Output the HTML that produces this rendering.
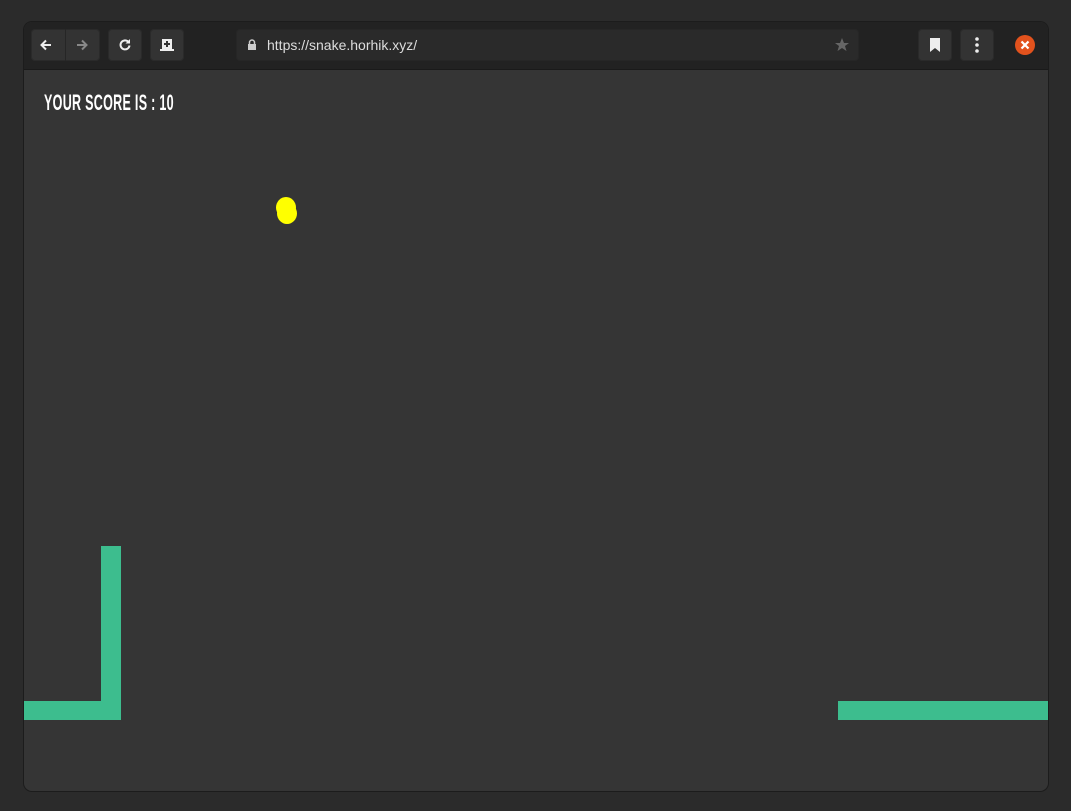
<!DOCTYPE html>
<html><head><style>
html,body{margin:0;padding:0;width:1071px;height:811px;background:#2b2b2b;overflow:hidden;font-family:"Liberation Sans",sans-serif}
.win{position:absolute;left:24px;top:22px;width:1024px;height:769px;border-radius:8px;background:#353535;overflow:hidden;box-shadow:0 0 0 1px #1c1c1c}
.bar{position:absolute;left:0;top:0;width:1024px;height:47px;background:#222;border-bottom:1px solid #1a1a1a}
.btn{position:absolute;top:7px;height:32px;background:#333;border-radius:4px;box-shadow:inset 0 0 0 1px #2a2a2a}
.url{position:absolute;left:212px;top:7px;width:623px;height:32px;background:#2a2a2a;border-radius:4px;box-shadow:inset 0 0 0 1px #262626}
.url span{position:absolute;left:31px;top:8px;color:#ddd;font-size:14px}
.g{position:absolute;background:#3dbd8e}
.score{position:absolute;left:20px;top:68px;color:#fff;font-weight:bold;font-size:22px;transform:scaleX(0.57);transform-origin:left top;white-space:nowrap;letter-spacing:0.5px}
.food{position:absolute;width:20px;height:21px;border-radius:50%;background:#ffff00}
</style></head><body>
<div class="win">
 <div class="bar">
  <div class="btn" style="left:7px;width:69px"></div>
  <div style="position:absolute;left:41px;top:7px;width:1px;height:32px;background:#262626"></div>
  <svg style="position:absolute;left:15px;top:16px" width="14" height="14" viewBox="0 0 14 14"><path d="M12 7H3M7 2.5L2.5 7 7 11.5" stroke="#eee" stroke-width="2" fill="none"/></svg>
  <svg style="position:absolute;left:51px;top:16px" width="14" height="14" viewBox="0 0 14 14"><path d="M2 7h9M7 2.5L11.5 7 7 11.5" stroke="#888" stroke-width="2" fill="none"/></svg>
  <div class="btn" style="left:84px;width:34px"></div>
  <svg style="position:absolute;left:93px;top:15px" width="16" height="16" viewBox="0 0 16 16"><path d="M12.5 8.5A4.5 4.5 0 1 1 11 4.5" stroke="#eee" stroke-width="2" fill="none"/><path d="M13 2v4.5H8.5z" fill="#eee"/></svg>
  <div class="btn" style="left:126px;width:34px"></div>
  <svg style="position:absolute;left:135px;top:16px" width="16" height="14" viewBox="0 0 16 14"><path d="M3 1h10v10h2v2H1v-2h2z" fill="#eee"/><path d="M8 3v6M5 6h6" stroke="#333" stroke-width="2"/></svg>
  <div class="url"><svg style="position:absolute;left:11px;top:10px" width="10" height="12" viewBox="0 0 10 12"><path d="M2.5 5V3.5a2.5 2.5 0 0 1 5 0V5" stroke="#ccc" stroke-width="1.5" fill="none"/><rect x="1" y="5" width="8" height="6" fill="#ccc"/></svg><span>https://snake.horhik.xyz/</span>
   <svg style="position:absolute;left:598px;top:8px" width="16" height="16" viewBox="0 0 16 16"><path d="M8 1l2 5h5l-4 3 1.5 5L8 11l-4.5 3L5 9 1 6h5z" fill="#666"/></svg></div>
  <div class="btn" style="left:894px;width:34px"></div>
  <svg style="position:absolute;left:906px;top:16px" width="10" height="14" viewBox="0 0 10 14"><path d="M0 0h10v14L5 10 0 14z" fill="#eee"/></svg>
  <div class="btn" style="left:936px;width:34px"></div>
  <svg style="position:absolute;left:950px;top:14px" width="6" height="18" viewBox="0 0 6 18"><circle cx="3" cy="3" r="1.8" fill="#eee"/><circle cx="3" cy="9" r="1.8" fill="#eee"/><circle cx="3" cy="15" r="1.8" fill="#eee"/></svg>
  <svg style="position:absolute;left:991px;top:13px" width="20" height="20" viewBox="0 0 20 20"><circle cx="10" cy="10" r="10" fill="#e2521d"/><path d="M6.5 6.5l7 7M13.5 6.5l-7 7" stroke="#fff" stroke-width="2.2"/></svg>
 </div>
 <div class="score">YOUR SCORE IS : 10</div>
 <div class="food" style="left:252px;top:175px"></div>
 <div class="food" style="left:253px;top:181px"></div>
 <div class="g" style="left:77px;top:524px;width:20px;height:174px"></div>
 <div class="g" style="left:0;top:679px;width:97px;height:19px"></div>
 <div class="g" style="left:814px;top:679px;width:210px;height:19px"></div>
</div>
</body></html>
